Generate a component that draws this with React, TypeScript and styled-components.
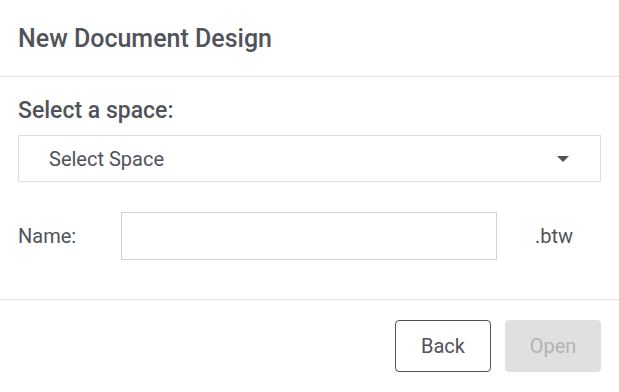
import styled, { createGlobalStyle } from "styled-components";

const GlobalStyle = createGlobalStyle`
  html, body {
    margin: 0;
    padding: 0;
    background: #ffffff;
  }
  body {
    font-family: Roboto, "Liberation Sans", Arial, sans-serif;
    color: #505359;
  }
`;

const Dialog = styled.div`
  width: 619px;
  height: 392px;
  display: flex;
  flex-direction: column;
  background: #ffffff;
`;

const Header = styled.div`
  height: 77px;
  display: flex;
  align-items: center;
  padding: 0 18px;
  border-bottom: 1px solid #e3e3e6;
  box-sizing: border-box;
`;

const Title = styled.h1`
  margin: 0;
  font-size: 25px;
  font-weight: 500;
  color: #505359;
`;

const Body = styled.div`
  padding: 20px 18px 0;
  height: 223px;
  box-sizing: border-box;
  display: flex;
  flex-direction: column;
  border-bottom: 1px solid #e3e3e6;
`;

const SectionLabel = styled.div`
  font-size: 23px;
  font-weight: 500;
  line-height: 28px;
  color: #505359;
  margin-bottom: 10px;
`;

const SelectBox = styled.div`
  height: 47px;
  box-sizing: border-box;
  border: 1px solid #dedee2;
  display: flex;
  align-items: center;
  justify-content: space-between;
  padding: 0 31px 0 30px;
  font-size: 20px;
  color: #505359;
`;

const Caret = styled.span`
  width: 0;
  height: 0;
  border-left: 6px solid transparent;
  border-right: 6px solid transparent;
  border-top: 6px solid #505359;
  margin-top: 1px;
`;

const FieldRow = styled.div`
  display: flex;
  align-items: center;
  margin-top: 30px;
`;

const FieldLabel = styled.label`
  width: 103px;
  font-size: 20px;
  color: #505359;
`;

const TextInput = styled.input`
  width: 376px;
  height: 48px;
  box-sizing: border-box;
  border: 1px solid #d4d4d8;
  outline: none;
  padding: 0 12px;
  font-family: inherit;
  font-size: 20px;
  color: #505359;
`;

const Suffix = styled.span`
  margin-left: 38px;
  font-size: 20px;
  color: #505359;
`;

const Footer = styled.div`
  flex: 1;
  display: flex;
  justify-content: flex-end;
  align-items: flex-start;
  gap: 14px;
  padding: 20px 18px 0;
`;

const Button = styled.button<{ $disabled?: boolean }>`
  width: 96px;
  height: 52px;
  box-sizing: border-box;
  border-radius: 4px;
  font-family: inherit;
  font-size: 20px;
  border: ${(p) => (p.$disabled ? "1px solid #e0e0e0" : "1px solid #505359")};
  background: ${(p) => (p.$disabled ? "#e0e0e0" : "#ffffff")};
  color: ${(p) => (p.$disabled ? "#b3b3b3" : "#505359")};
  cursor: ${(p) => (p.$disabled ? "default" : "pointer")};
`;

export default function App() {
  return (
    <>
      <GlobalStyle />
      <Dialog>
        <Header>
          <Title>New Document Design</Title>
        </Header>
        <Body>
          <SectionLabel>Select a space:</SectionLabel>
          <SelectBox>
            <span>Select Space</span>
            <Caret />
          </SelectBox>
          <FieldRow>
            <FieldLabel>Name:</FieldLabel>
            <TextInput type="text" />
            <Suffix>.btw</Suffix>
          </FieldRow>
        </Body>
        <Footer>
          <Button>Back</Button>
          <Button $disabled disabled>
            Open
          </Button>
        </Footer>
      </Dialog>
    </>
  );
}
